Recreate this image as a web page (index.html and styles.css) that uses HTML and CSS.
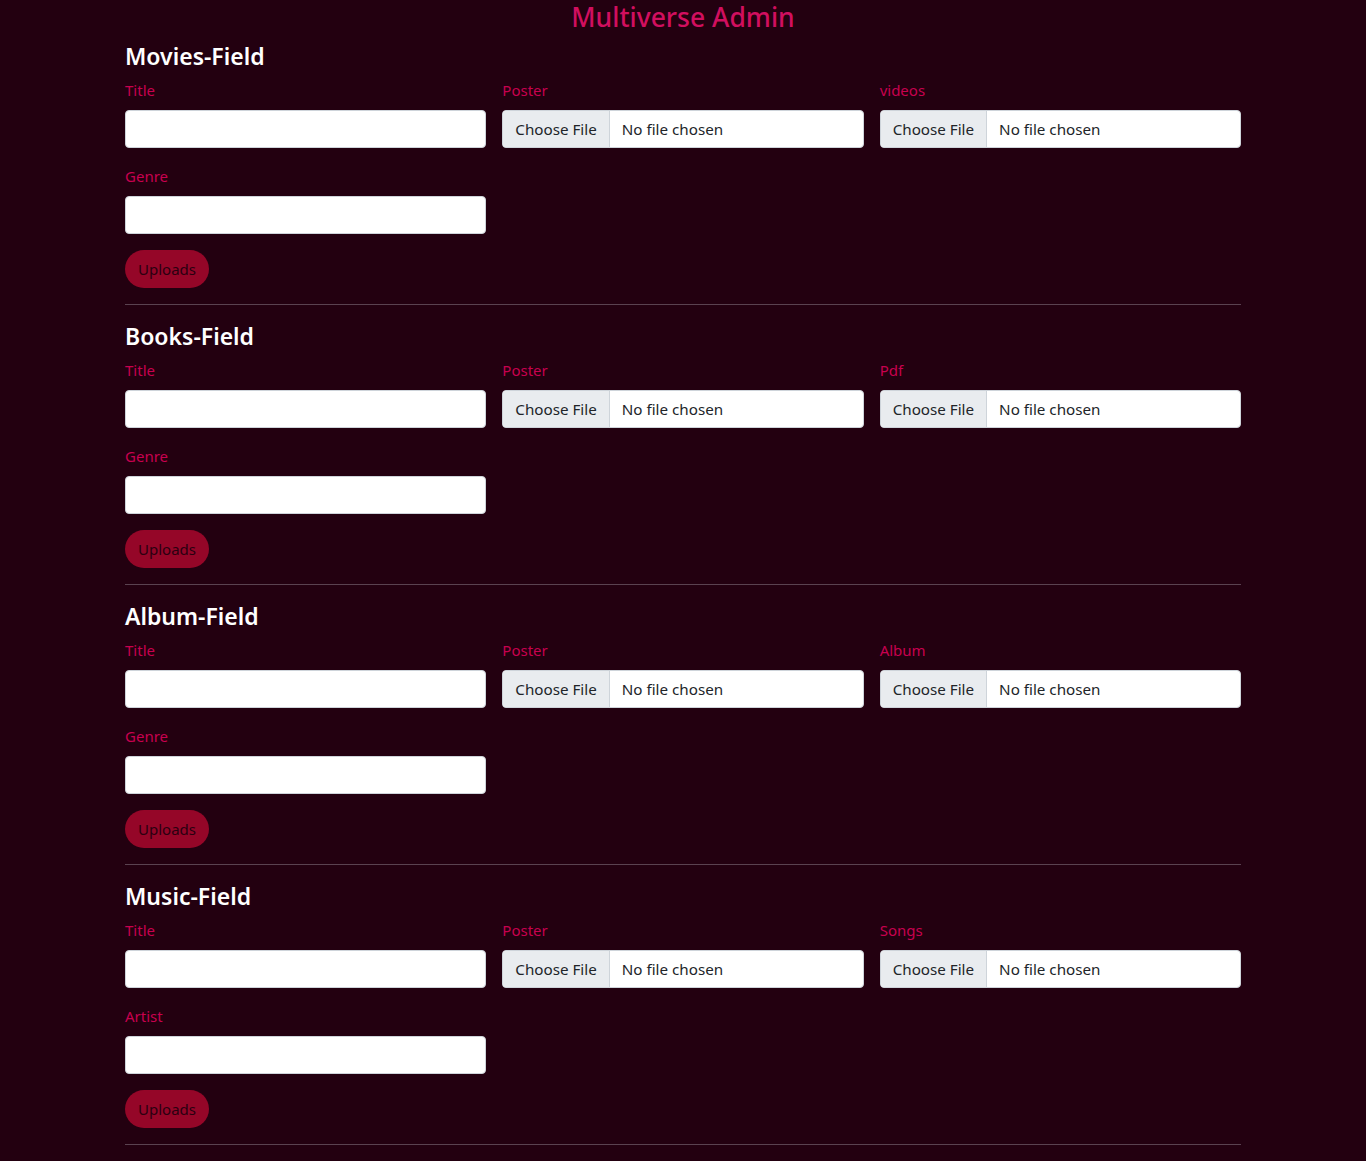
FILE: index.html
```html
<!DOCTYPE html>
<html lang="en">
<head>
<meta charset="utf-8">
<title>Multiverse Admin</title>
<link rel="stylesheet" href="styles.css">
</head>
<body>
<h1 class="page-title">Multiverse Admin</h1>
<main class="container">
  <section class="field-section">
    <h2 class="section-title">Movies-Field</h2>
    <form class="upload-form">
      <div class="form-grid">
        <div class="field"><label class="field-label">Title</label><input class="text-input" type="text"></div>
        <div class="field"><label class="field-label">Poster</label><input class="file-input" type="file"></div>
        <div class="field"><label class="field-label">videos</label><input class="file-input" type="file"></div>
        <div class="field"><label class="field-label">Genre</label><input class="text-input" type="text"></div>
      </div>
      <button class="upload-btn" type="button">Uploads</button>
    </form>
    <hr class="divider">
  </section>
  <section class="field-section">
    <h2 class="section-title">Books-Field</h2>
    <form class="upload-form">
      <div class="form-grid">
        <div class="field"><label class="field-label">Title</label><input class="text-input" type="text"></div>
        <div class="field"><label class="field-label">Poster</label><input class="file-input" type="file"></div>
        <div class="field"><label class="field-label">Pdf</label><input class="file-input" type="file"></div>
        <div class="field"><label class="field-label">Genre</label><input class="text-input" type="text"></div>
      </div>
      <button class="upload-btn" type="button">Uploads</button>
    </form>
    <hr class="divider">
  </section>
  <section class="field-section">
    <h2 class="section-title">Album-Field</h2>
    <form class="upload-form">
      <div class="form-grid">
        <div class="field"><label class="field-label">Title</label><input class="text-input" type="text"></div>
        <div class="field"><label class="field-label">Poster</label><input class="file-input" type="file"></div>
        <div class="field"><label class="field-label">Album</label><input class="file-input" type="file"></div>
        <div class="field"><label class="field-label">Genre</label><input class="text-input" type="text"></div>
      </div>
      <button class="upload-btn" type="button">Uploads</button>
    </form>
    <hr class="divider">
  </section>
  <section class="field-section">
    <h2 class="section-title">Music-Field</h2>
    <form class="upload-form">
      <div class="form-grid">
        <div class="field"><label class="field-label">Title</label><input class="text-input" type="text"></div>
        <div class="field"><label class="field-label">Poster</label><input class="file-input" type="file"></div>
        <div class="field"><label class="field-label">Songs</label><input class="file-input" type="file"></div>
        <div class="field"><label class="field-label">Artist</label><input class="text-input" type="text"></div>
      </div>
      <button class="upload-btn" type="button">Uploads</button>
    </form>
    <hr class="divider">
  </section>
</main>
</body>
</html>
```
FILE: styles.css
```css
* { box-sizing: border-box; }

body {
  margin: 0;
  background: #230010;
  color: #fff;
  font-family: "Noto Sans", "Open Sans", sans-serif;
  font-size: 16px;
  line-height: 1.5;
}

.page-title {
  margin: 0 0 8px;
  padding-top: 2px;
  text-align: center;
  font-size: 26.5px;
  font-weight: 500;
  line-height: 31px;
  color: #d10f5f;
}

.container {
  width: 1116px;
  margin: 0 auto;
}

.section-title {
  margin: 0 0 8px;
  padding-top: 2px;
  font-size: 23px;
  font-weight: 600;
  line-height: 27px;
  color: #fff;
}

.form-grid {
  display: grid;
  grid-template-columns: repeat(3, 1fr);
  column-gap: 16px;
  row-gap: 16px;
  margin-bottom: 16px;
}

.field {
  display: flex;
  flex-direction: column;
}

.field-label {
  display: block;
  margin-bottom: 8px;
  color: #c8004f;
  font-size: 15px;
  line-height: 24px;
}

.text-input,
.file-input {
  display: block;
  width: 100%;
  height: 38px;
  padding: 5px 12px 7px;
  font-family: inherit;
  font-size: 15.2px;
  line-height: 24px;
  color: #212529;
  background: #fff;
  border: 1px solid #ced4da;
  border-radius: 4px;
  overflow: hidden;
}

.file-input::file-selector-button {
  padding: 5px 12px 7px;
  margin: -5px 12px -7px -12px;
  height: 38px;
  font-family: inherit;
  font-size: 15.2px;
  color: #212529;
  background: #e9ecef;
  border: 0 solid #ced4da;
  border-right-width: 1px;
  border-radius: 0;
}

.upload-btn {
  display: block;
  height: 38px;
  padding: 6px 13px;
  font-family: inherit;
  font-size: 15px;
  line-height: 24px;
  color: #2a0010;
  background: #950628;
  border: 0;
  border-radius: 19px;
}

.divider {
  margin: 16px 0;
  border: 0;
  border-top: 1px solid #5a4250;
}
```
